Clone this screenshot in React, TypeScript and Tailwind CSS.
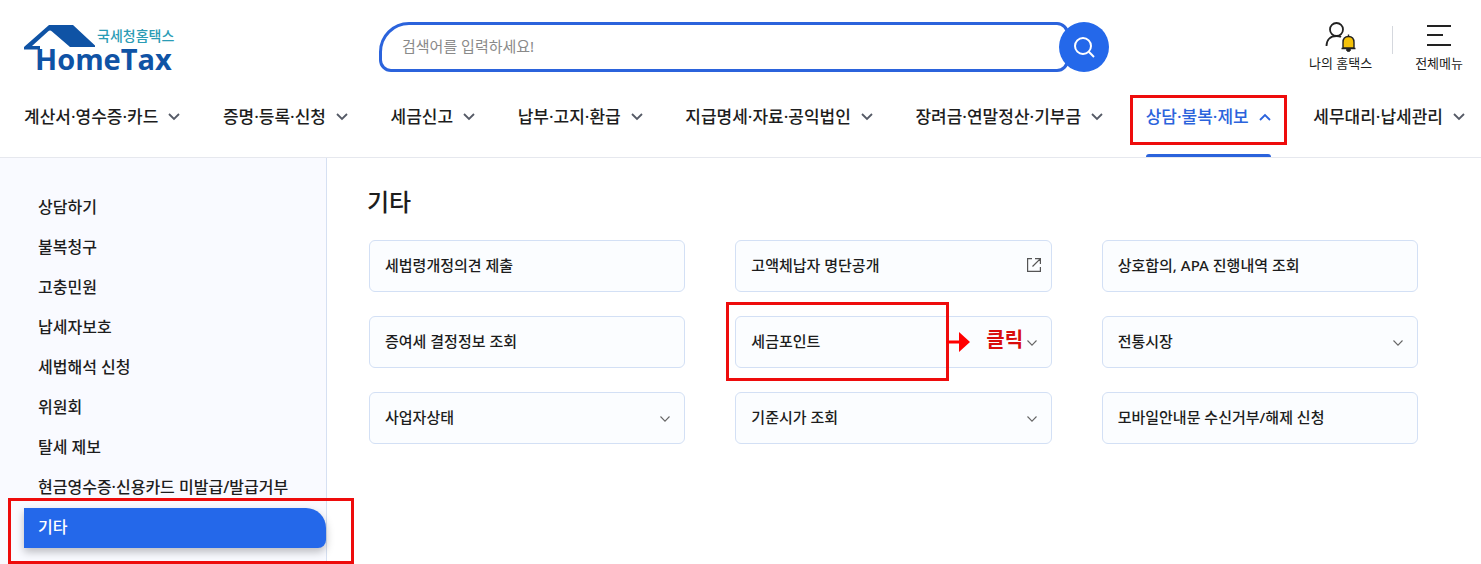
import React from 'react';

interface NavItem {
  label: string;
  active?: boolean;
}

interface MenuCard {
  label: string;
  icon?: 'expand' | 'external';
  marked?: boolean;
}

const NAV_ITEMS: NavItem[] = [
  { label: '계산서·영수증·카드' },
  { label: '증명·등록·신청' },
  { label: '세금신고' },
  { label: '납부·고지·환급' },
  { label: '지급명세·자료·공익법인' },
  { label: '장려금·연말정산·기부금' },
  { label: '상담·불복·제보', active: true },
  { label: '세무대리·납세관리' },
];

const SIDE_ITEMS: NavItem[] = [
  { label: '상담하기' },
  { label: '불복청구' },
  { label: '고충민원' },
  { label: '납세자보호' },
  { label: '세법해석 신청' },
  { label: '위원회' },
  { label: '탈세 제보' },
  { label: '현금영수증·신용카드 미발급/발급거부' },
  { label: '기타', active: true },
];

const CARDS: MenuCard[] = [
  { label: '세법령개정의견 제출' },
  { label: '고액체납자 명단공개', icon: 'external' },
  { label: '상호합의, APA 진행내역 조회' },
  { label: '증여세 결정정보 조회' },
  { label: '세금포인트', icon: 'expand', marked: true },
  { label: '전통시장', icon: 'expand' },
  { label: '사업자상태', icon: 'expand' },
  { label: '기준시가 조회', icon: 'expand' },
  { label: '모바일안내문 수신거부/해제 신청' },
];

const Logo: React.FC = () => (
  <a href="#" aria-label="HomeTax" className="block h-12 w-[149px] shrink-0">
    <svg viewBox="0 0 149 48" className="h-12 w-[149px] overflow-visible">
      <path d="M0 25.500V23L25 1h24l22 20.500V23H46L28 7.500Q26 5.500 24 7.500L8 22h8v3.500z" fill="#0f53a5" />
      <text x="73" y="17" fontSize="14" fontWeight="500" fill="#2b9cb5" fontFamily="Noto Sans CJK KR, sans-serif">
        국세청홈택스
      </text>
      <text x="11" y="46" fontSize="29" fontWeight="700" fill="#0f53a5" fontFamily="Open Sans, sans-serif">
        HomeTax
      </text>
    </svg>
  </a>
);

const SearchBar: React.FC = () => (
  <form className="relative flex h-[50px] w-full max-w-[730px]">
    <input
      type="text"
      aria-label="검색어"
      placeholder="검색어를 입력하세요!"
      className="mr-10 h-full min-w-0 flex-1 rounded-xl rounded-tl-[30px] border-3 border-[#2b63dc] bg-white px-5 pb-0.5 text-[15px] placeholder:text-[#8a8a8a] focus:outline-none"
    />
    <button
      type="button"
      aria-label="검색"
      className="absolute right-0 top-0 flex h-[50px] w-[50px] items-center justify-center rounded-full bg-[#2468ea]"
    >
      <svg viewBox="0 0 24 24" className="h-6 w-6" fill="none" stroke="#fff" strokeWidth="2">
        <circle cx="11" cy="11" r="8" />
        <path d="M16.800 16.800L22 22" />
      </svg>
    </button>
  </form>
);

const NavChevron: React.FC<{ up?: boolean }> = ({ up }) => (
  <svg viewBox="0 0 12 8" className="h-2 w-3" fill="none" stroke={up ? '#2b63dc' : '#555a66'} strokeWidth="1.800">
    <path d={up ? 'M1 7l5-5 5 5' : 'M1 1l5 5 5-5'} />
  </svg>
);

const CardIcon: React.FC<{ type: 'expand' | 'external' }> = ({ type }) => {
  if (type === 'external') {
    return (
      <svg viewBox="0 0 14 14" className="h-3.5 w-3.5" fill="none" stroke="#555" strokeWidth="1.200">
        <path d="M5 .6H.6v12.800h12.800V9M8 .6h5.400V6M13.200.8L5.500 8.500" />
      </svg>
    );
  }
  return (
    <svg viewBox="0 0 10 6" className="mt-1 mr-1 h-1.5 w-2.5" fill="none" stroke="#666" strokeWidth="1.100">
      <path d="M.5.500L5 5.200 9.500.500" />
    </svg>
  );
};

const App: React.FC = () => {
  return (
    <div className="bg-white font-['Noto_Sans','Noto_Sans_CJK_KR',sans-serif] text-[#1d1d1d]">
      <header className="border-b border-[#e6e8ee]">
        <div className="flex items-end pt-[22px] pr-[18px] pl-6">
          <Logo />
          <div className="flex flex-1 justify-center pr-1.5 pl-3">
            <SearchBar />
          </div>
          <div className="flex items-start">
            <button type="button" className="flex flex-col items-center">
              <svg viewBox="0 0 32 32" className="h-8 w-8" fill="none" stroke="#222" strokeWidth="1.800">
                <circle cx="11.500" cy="7.500" r="6.500" />
                <path d="M1.500 24c0-6 3.500-10 10-10 2 0 3.500.3 4.500 1" />
                <path
                  d="M16.500 26.500h14M18 26v-5.500c0-3.500 2-6 5.500-6s5.500 2.500 5.500 6V26z"
                  fill="#f5c20a"
                  strokeWidth="1.400"
                />
                <path d="M23.500 12.500v2" strokeWidth="1.400" />
                <path d="M21.500 27.500a2 2 0 0 0 4 0z" fill="#222" strokeWidth="1" />
              </svg>
              <span className="text-[13px] leading-[18px]">나의 홈택스</span>
            </button>
            <span className="mt-1 mr-[22px] ml-5 h-7 w-px bg-[#d5d8de]" />
            <button type="button" className="flex flex-col items-center">
              <svg viewBox="0 0 26 32" className="h-8 w-[26px]" fill="none" stroke="#222" strokeWidth="2">
                <path d="M1 4h24M1 13h16M1 23h24" />
              </svg>
              <span className="text-[13px] leading-[18px]">전체메뉴</span>
            </button>
          </div>
        </div>

        <nav className="flex h-[85px] items-stretch justify-between pr-4 pl-6">
          {NAV_ITEMS.map((item) => (
            <a
              key={item.label}
              href="#"
              className={`relative flex items-center gap-2.5 whitespace-nowrap pt-1 text-[17px] font-medium ${
                item.active ? 'text-[#2b63dc]' : ''
              }`}
            >
              {item.label}
              <NavChevron up={item.active} />
              {item.active && (
                <>
                  <span className="absolute inset-x-0 bottom-0 h-[3px] rounded-t bg-[#2b63dc]" />
                  <span className="absolute -inset-x-4 top-[23px] h-[50px] border-3 border-[#ee0c0c]" />
                </>
              )}
            </a>
          ))}
        </nav>
      </header>

      <div className="flex">
        <aside className="w-[327px] shrink-0 border-r border-[#d6e0f2] bg-[#f9faff] pt-[30px] pb-4 pl-6">
          <ul>
            {SIDE_ITEMS.map((item) => (
              <li key={item.label} className="relative">
                <a
                  href="#"
                  className={`flex h-10 items-center whitespace-nowrap pb-0.5 pl-3.5 text-base font-medium ${
                    item.active ? 'rounded-tr-[20px] rounded-br-lg bg-[#2468ea] text-white shadow-[0_4px_8px_rgba(0,0,0,0.25)]' : ''
                  }`}
                >
                  {item.label}
                </a>
                {item.active && (
                  <span className="absolute -top-2.5 -right-7 -bottom-4 -left-4 border-3 border-[#ee0c0c]" />
                )}
              </li>
            ))}
          </ul>
        </aside>

        <main className="flex-1 pt-6 pr-[63px] pl-10">
          <h1 className="text-2xl leading-10 font-medium">기타</h1>
          <ul className="mt-[18px] ml-0.5 grid grid-cols-3 gap-x-[50px] gap-y-6">
            {CARDS.map((card) => (
              <li key={card.label} className="relative">
                <a
                  href="#"
                  className="flex h-[52px] items-center justify-between rounded-md border border-[#d3e0f5] bg-[#fbfdff] pr-2.5 pb-0.5 pl-[15px] text-[15px] font-medium"
                >
                  {card.label}
                  {card.icon && <CardIcon type={card.icon} />}
                </a>
                {card.marked && (
                  <>
                    <span className="absolute -top-3.5 -left-[9px] h-[79px] w-[223px] border-3 border-[#ee0c0c]" />
                    <span className="absolute top-2.5 left-[211px] flex items-center gap-4">
                      <svg viewBox="0 0 24 22" className="h-[22px] w-6" fill="#f00">
                        <path d="M0 9.500h13V1l11 10-11 10v-8.500H0z" />
                      </svg>
                      <strong className="pb-1 text-xl leading-7 font-bold text-[#d80c0c]">클릭</strong>
                    </span>
                  </>
                )}
              </li>
            ))}
          </ul>
        </main>
      </div>
    </div>
  );
};

export default App;
